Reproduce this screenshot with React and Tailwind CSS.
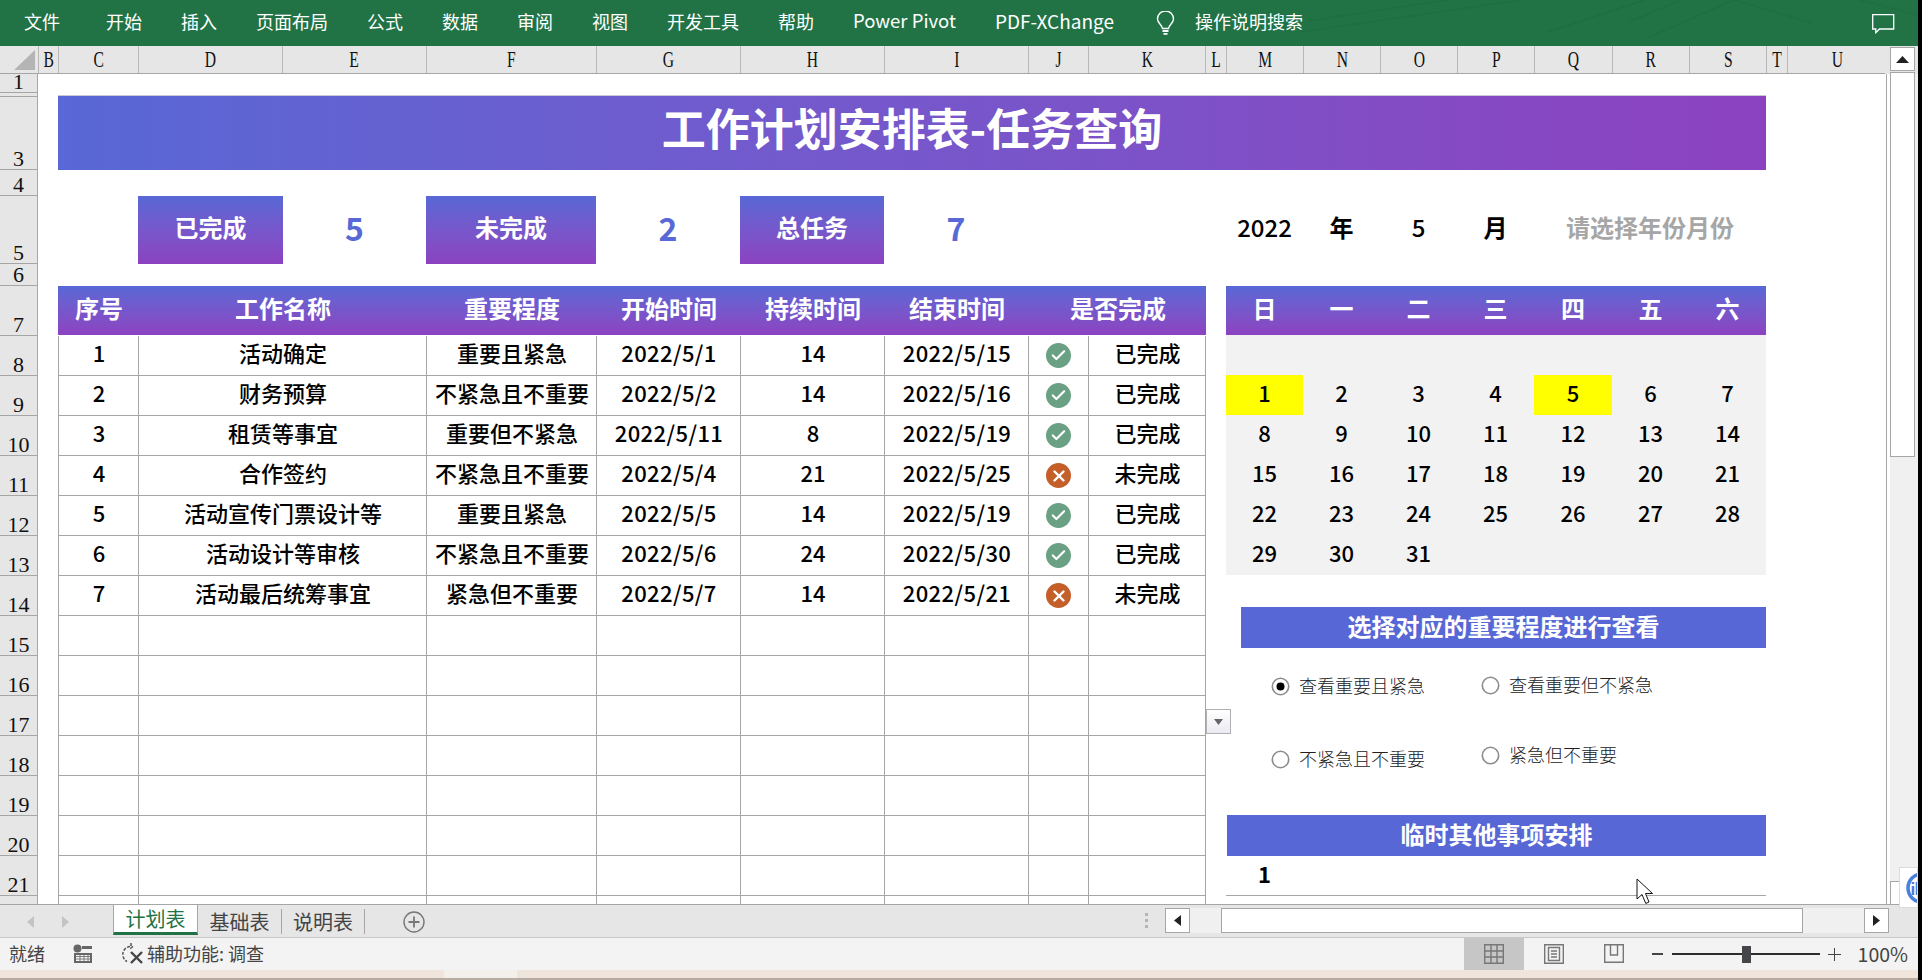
import { Check, X } from "lucide-react";

const ribbonTabs = ["开始", "插入", "页面布局", "公式", "数据", "审阅", "视图", "开发工具", "帮助"];

const columns = [
  { name: "B", w: "w-[20px]" },
  { name: "C", w: "w-[80px]" },
  { name: "D", w: "w-[144px]" },
  { name: "E", w: "w-[144px]" },
  { name: "F", w: "w-[170px]" },
  { name: "G", w: "w-[144px]" },
  { name: "H", w: "w-[144px]" },
  { name: "I", w: "w-[144px]" },
  { name: "J", w: "w-[60px]" },
  { name: "K", w: "w-[117px]" },
  { name: "L", w: "w-[21px]" },
  { name: "M", w: "w-[77px]" },
  { name: "N", w: "w-[77px]" },
  { name: "O", w: "w-[77px]" },
  { name: "P", w: "w-[77px]" },
  { name: "Q", w: "w-[78px]" },
  { name: "R", w: "w-[77px]" },
  { name: "S", w: "w-[77px]" },
  { name: "T", w: "w-[21px]" },
  { name: "U", w: "w-[99px]" },
];

const rowHeaders = [
  { n: "1", h: "h-[19px]" },
  { n: "", h: "h-[4px]" },
  { n: "3", h: "h-[73px]" },
  { n: "4", h: "h-[26px]" },
  { n: "5", h: "h-[68px]" },
  { n: "6", h: "h-[22px]" },
  { n: "7", h: "h-[50px]" },
  ...[8, 9, 10, 11, 12, 13, 14, 15, 16, 17, 18, 19, 20, 21].map((n) => ({ n: String(n), h: "h-10" })),
  { n: "", h: "h-10" },
];

const tasks = [
  [1, "活动确定", "重要且紧急", "2022/5/1", 14, "2022/5/15", true],
  [2, "财务预算", "不紧急且不重要", "2022/5/2", 14, "2022/5/16", true],
  [3, "租赁等事宜", "重要但不紧急", "2022/5/11", 8, "2022/5/19", true],
  [4, "合作签约", "不紧急且不重要", "2022/5/4", 21, "2022/5/25", false],
  [5, "活动宣传门票设计等", "重要且紧急", "2022/5/5", 14, "2022/5/19", true],
  [6, "活动设计等审核", "不紧急且不重要", "2022/5/6", 24, "2022/5/30", true],
  [7, "活动最后统筹事宜", "紧急但不重要", "2022/5/7", 14, "2022/5/21", false],
];

const tableCols = "grid grid-cols-[80px_288px_170px_144px_144px_144px_60px_118px]";
const calCols = "grid grid-cols-[77px_77px_77px_77px_78px_77px_77px]";
const headGradient = "bg-linear-to-b from-[#5868d6] to-[#8c42c0]";
const box = "flex h-10 items-center justify-center border-b border-l border-[#a6a6a6]";
const cell = `${box} pb-[6px] pl-[1px]`;

const days = [...Array(7).fill(""), ...Array.from({ length: 31 }, (_, i) => i + 1), ...Array(4).fill("")];

function StatusIcon({ done }) {
  return (
    <span className={`flex h-[25px] w-[25px] items-center justify-center rounded-full ${done ? "bg-[#6aa084]" : "bg-[#c55f2a]"}`}>
      {done ? <Check size={17} strokeWidth={3} color="#fff" /> : <X size={18} strokeWidth={3.2} color="#fff" />}
    </span>
  );
}

function Radio({ label, checked, className }) {
  return (
    <div className={`flex items-center gap-[9px] ${className}`}>
      <svg width="19" height="19" viewBox="0 0 19 19">
        <circle cx="9.500" cy="9.500" r="8.200" fill="#fff" stroke="#8c8c8c" strokeWidth="1.600" />
        {checked && <circle cx="9.500" cy="9.500" r="4" fill="#000" />}
      </svg>
      <span className="pb-[3px] text-[18px] leading-[20px] font-light text-[#222]">{label}</span>
    </div>
  );
}

function StatCard({ w, label }) {
  return (
    <div className={`flex h-[68px] items-center justify-center pb-[6px] text-[24px] font-bold text-white ${w} ${headGradient}`}>
      {label}
    </div>
  );
}

function StatValue({ w, value }) {
  return <div className={`pb-[6px] text-center text-[32px] font-bold text-[#5868d6] ${w}`}>{value}</div>;
}

export default function App() {
  return (
    <div className="relative flex h-[980px] w-[1922px] flex-col overflow-hidden bg-white font-['Noto_Sans_CJK_SC','Noto_Sans',sans-serif] text-black">
      {/* ribbon */}
      <div className="relative flex h-[46px] w-[1918px] shrink-0 items-center gap-[39px] bg-[#217346] pl-[24px] text-[18px] text-white">
        <svg className="absolute inset-0" width="1918" height="46" fill="none" stroke="#1f6e43" strokeWidth="1.500">
          <path d="M1308 21L1447 0M1300 32L1522 0M1548 32L1645 0M1629 22L1681 0M1649 37L1734 0L1812 23M1860 0L1918 15" />
        </svg>
        <span className="relative mr-[7px] -translate-y-[2px]">文件</span>
        {ribbonTabs.map((t) => (
          <span key={t} className="relative -translate-y-[2px]">{t}</span>
        ))}
        <span className="relative -translate-y-[2px] text-[18.500px]">Power Pivot</span>
        <span className="relative -translate-y-[2px] text-[19px]">PDF-XChange</span>
        <div className="relative ml-[3px] flex items-center gap-[20px]">
          <svg width="19" height="24" viewBox="0 0 19 24" fill="none" stroke="#fff" strokeWidth="1.400">
            <path d="M6.500 17.500C6.200 14 1.500 12 1.500 8a8 8 0 0 1 16 0c0 4-4.700 6-5 9.500z" />
            <path d="M6.500 20h6M7.500 22.800h4" strokeWidth="1.800" />
          </svg>
          <span className="-translate-y-[2px]">操作说明搜索</span>
        </div>
        <svg className="absolute left-[1872px] top-[14px]" width="23" height="20" viewBox="0 0 23 20" fill="none" stroke="#fff" strokeWidth="1.300">
          <path d="M.7.700h21v14.300H7.500l-3.700 3.700v-3.700H.7z" />
        </svg>
      </div>

      {/* column letters */}
      <div className="flex h-[28px] w-[1918px] shrink-0 border-b border-[#a6a6a6] bg-[#e6e6e6]">
        <div className="flex w-[38px] items-end justify-end pb-[3px] pr-[3px]">
          <svg width="21" height="20"><path d="M21 0V20H0z" fill="#b4b4b4" /></svg>
        </div>
        {columns.map((c) => (
          <div key={c.name} className={`flex items-center justify-center border-l border-[#b8b8b8] ${c.w}`}>
            <span className="inline-block scale-x-[0.68] font-['Liberation_Serif',serif] text-[23px] leading-none text-[#111]">{c.name}</span>
          </div>
        ))}
      </div>

      {/* sheet */}
      <div className="flex h-[830px] w-[1918px] shrink-0 overflow-hidden">
        <div className="w-[38px] shrink-0 border-r border-[#a6a6a6] bg-[#e6e6e6]">
          {rowHeaders.map((r, i) => (
            <div key={i} className={`flex items-end justify-center border-b border-[#a6a6a6] font-['Liberation_Serif',serif] text-[22px] leading-[16px] text-[#111] ${r.h}`}>
              {r.n && <span className="pb-[2px]">{r.n}</span>}
            </div>
          ))}
        </div>

        <div className="w-[1849px] shrink-0 border-r border-[#a6a6a6] pl-[20px] font-medium">
          <div className="mt-[21px] flex h-[75px] w-[1708px] items-center justify-center border-t border-[#c8c8d8] bg-linear-to-r from-[#5868d6] to-[#8c42c0] pb-[12px] text-[44px] font-bold text-white">
            工作计划安排表-任务查询
          </div>

          <div className="mt-[26px] flex h-[68px] items-center text-[24px]">
            <div className="w-[80px]" />
            <StatCard w="w-[145px]" label="已完成" />
            <StatValue w="w-[143px]" value="5" />
            <StatCard w="w-[170px]" label="未完成" />
            <StatValue w="w-[144px]" value="2" />
            <StatCard w="w-[144px]" label="总任务" />
            <StatValue w="w-[144px]" value="7" />
            <div className="w-[198px]" />
            <div className="w-[77px] pb-[6px] text-center">2022</div>
            <div className="w-[77px] pb-[6px] text-center font-bold">年</div>
            <div className="w-[77px] pb-[6px] text-center">5</div>
            <div className="w-[77px] pb-[6px] text-center font-bold">月</div>
            <div className="w-[232px] pb-[6px] text-center font-bold text-[#a6a6a6]">请选择年份月份</div>
          </div>

          <div className="mt-[22px] flex gap-[20px]">
            {/* task table */}
            <div className="w-[1148px] shrink-0 text-[22px]">
              <div className={`${tableCols} mb-px h-[49px] items-center pb-[5px] text-center text-[24px] font-bold text-white [&>div]:pl-[2px] ${headGradient}`}>
                <div>序号</div>
                <div>工作名称</div>
                <div>重要程度</div>
                <div>开始时间</div>
                <div>持续时间</div>
                <div>结束时间</div>
                <div className="col-span-2">是否完成</div>
              </div>
              {Array.from({ length: 15 }, (_, i) => tasks[i] || []).map((t, i) => (
                <div key={i} className={tableCols}>
                  <div className={cell}>{t[0]}</div>
                  <div className={cell}>{t[1]}</div>
                  <div className={cell}>{t[2]}</div>
                  <div className={`${cell} tracking-[0.4px]`}>{t[3]}</div>
                  <div className={cell}>{t[4]}</div>
                  <div className={`${cell} tracking-[0.4px]`}>{t[5]}</div>
                  <div className={box}>{t[0] && <StatusIcon done={t[6]} />}</div>
                  <div className={`${cell} border-r`}>{t[0] && (t[6] ? "已完成" : "未完成")}</div>
                </div>
              ))}
            </div>

            {/* calendar and side panels */}
            <div className="relative w-[540px] shrink-0">
              <div className={`${calCols} h-[49px] items-center pb-[5px] text-center text-[24px] font-bold text-white ${headGradient}`}>
                {["日", "一", "二", "三", "四", "五", "六"].map((d) => (
                  <div key={d}>{d}</div>
                ))}
              </div>
              <div className={`${calCols} bg-[#f2f2f2] text-[22px]`}>
                {days.map((d, i) => (
                  <div key={i} className={`flex h-10 items-center justify-center pb-[6px] ${d === 1 || d === 5 ? "bg-[#ffff00]" : ""}`}>
                    {d}
                  </div>
                ))}
              </div>

              <div className="ml-[15px] mt-[32px] flex h-[41px] items-center justify-center bg-[#5867d6] pb-[4px] text-[24px] font-bold text-white">
                选择对应的重要程度进行查看
              </div>
              <div className="flex h-[167px] pl-[45px]">
                <div className="w-[210px] pt-[27px]">
                  <Radio label="查看重要且紧急" checked />
                  <Radio label="不紧急且不重要" className="mt-[50px]" />
                </div>
                <div className="pt-[26px]">
                  <Radio label="查看重要但不紧急" />
                  <Radio label="紧急但不重要" className="mt-[47px]" />
                </div>
              </div>

              <div className="ml-[1px] flex h-[41px] items-center justify-center bg-[#5867d6] pb-[4px] text-[24px] font-bold text-white">
                临时其他事项安排
              </div>
              <div className="flex h-10 items-center border-b border-[#a6a6a6] text-[22px] font-bold">
                <div className="w-[77px] pb-[4px] text-center">1</div>
              </div>

              {/* collapse button floating between the table and the side panel */}
              <div className="absolute -left-[20px] top-[423px] flex h-[25px] w-[25px] items-center justify-center border border-[#b0b0b0] bg-linear-to-b from-white to-[#eaeaf2]">
                <svg width="9" height="6"><path d="M0 0H9L4.500 6z" fill="#666" /></svg>
              </div>

              {/* mouse pointer */}
              <svg className="absolute left-[410px] top-[592px]" width="20" height="27" viewBox="0 0 20 27">
                <path d="M1 1V21L6 16.500L9.800 25.500L13 24L9.500 15.500H16.500z" fill="#fff" stroke="#111" strokeWidth="1" />
              </svg>
            </div>
          </div>
        </div>

        {/* vertical scrollbar slot */}
        <div className="ml-[2px] w-[25px] shrink-0" />
      </div>

      {/* sheet tabs and horizontal scrollbar */}
      <div className="flex h-[33px] w-[1918px] shrink-0 items-start border-t border-[#a6a6a6] bg-[#e6e6e6] text-[20px] text-[#444]">
        <div className="ml-[27px] mt-[11px] flex w-[86px] gap-[28px]">
          <svg width="7" height="12"><path d="M7 0V12L0 6z" fill="#c4c4c4" /></svg>
          <svg width="7" height="12"><path d="M0 0V12L7 6z" fill="#c4c4c4" /></svg>
        </div>
        <div className="flex h-[30px] w-[85px] items-center justify-center border-x border-b-[3px] border-x-[#a6a6a6] border-b-[#217346] bg-white leading-none text-[#217346]">计划表</div>
        <div className="mt-[4px] flex h-[25px] w-[84px] items-center justify-center border-r border-[#a6a6a6] leading-none">基础表</div>
        <div className="mt-[4px] flex h-[25px] w-[83px] items-center justify-center border-r border-[#a6a6a6] leading-none">说明表</div>
        <svg className="ml-[38px] mt-[6px]" width="22" height="22" viewBox="0 0 22 22" fill="none" stroke="#777" strokeWidth="1.400">
          <circle cx="11" cy="11" r="10" />
          <path d="M11 5.500v11M5.500 11h11" strokeWidth="1.800" />
        </svg>
        <div className="ml-[720px] mt-[8px] flex w-[3px] flex-col gap-[3px]">
          <span className="h-[3px] bg-[#b4b4b4]" />
          <span className="h-[3px] bg-[#b4b4b4]" />
          <span className="h-[3px] bg-[#b4b4b4]" />
        </div>
        <div className="ml-[17px] mt-[3px] flex h-[25px]">
          <div className="flex w-[25px] items-center justify-center border border-[#a6a6a6] bg-white">
            <svg width="7" height="11"><path d="M7 0V11L0 5.500z" fill="#222" /></svg>
          </div>
          <div className="w-[674px] bg-[#f0f0f0] pl-[31px]">
            <div className="h-full w-[582px] border border-[#a6a6a6] bg-white" />
          </div>
          <div className="flex w-[25px] items-center justify-center border border-[#a6a6a6] bg-white">
            <svg width="7" height="11"><path d="M0 0V11L7 5.500z" fill="#222" /></svg>
          </div>
        </div>
      </div>

      {/* status bar */}
      <div className="flex h-[33px] w-[1918px] shrink-0 items-center border-t border-[#c8c8c8] bg-[#f3f3f3] text-[18px] text-[#444]">
        <span className="ml-[9px] -translate-y-[1px]">就绪</span>
        <svg className="ml-[28px]" width="20" height="20" viewBox="0 0 20 20" fill="#666">
          <circle cx="4.500" cy="4.500" r="4" />
          <path d="M9 2h10v3H9zM1 9h18v10H1z" />
          <path d="M3 11h14v6H3z" fill="#f3f3f3" />
          <path d="M3 12.500h14M3 15h14M7 11v6M11 11v6M15 11v6" stroke="#666" strokeWidth=".8" />
        </svg>
        <svg className="ml-[29px]" width="22" height="24" viewBox="0 0 22 24" fill="none" stroke="#555" strokeWidth="1.500">
          <path d="M8 4.500a8 8 0 0 0-3 15M9 1v5l3-2.500" strokeDasharray="3 1.500" />
          <path d="M9 10l11 11M20 10L9 21" strokeWidth="2.400" stroke="#444" />
        </svg>
        <span className="ml-[3px] -translate-y-[1px]">辅助功能: 调查</span>

        <div className="ml-auto flex h-full items-center">
          <div className="flex h-full w-[60px] items-center justify-center bg-[#c6c6c6]">
            <svg width="20" height="20" fill="none" stroke="#777" strokeWidth="1.400">
              <path d="M.7.700h18.600v18.600H.7zM7 .7v18.600M13 .7v18.600M.7 7h18.600M.7 13h18.600" />
            </svg>
          </div>
          <div className="flex h-full w-[60px] items-center justify-center">
            <svg width="20" height="20" fill="none" stroke="#777" strokeWidth="1.400">
              <path d="M.7.700h18.600v18.600H.7zM4.500 3.500h11v13h-11zM7 7h6M7 10h6M7 13h6" />
            </svg>
          </div>
          <div className="flex h-full w-[60px] items-center justify-center">
            <svg width="20" height="20" fill="none" stroke="#777" strokeWidth="1.400">
              <path d="M.7.700h18.600v17.600H.7zM6.500.7v10.300h7V.7" />
            </svg>
          </div>
          <div className="ml-[8px] h-[1.500px] w-[11px] bg-[#444]" />
          <div className="relative ml-[9px] h-[2.500px] w-[148px] bg-[#2d2d2d]">
            <div className="absolute -top-[7px] left-[70px] h-[17px] w-[9px] bg-[#45464a]" />
          </div>
          <div className="relative ml-[8px] h-[13px] w-[13px]">
            <div className="absolute left-0 top-[6px] h-[1.500px] w-[13px] bg-[#444]" />
            <div className="absolute left-[6px] top-0 h-[13px] w-[1.500px] bg-[#444]" />
          </div>
          <span className="ml-[17px] mr-[10px] text-[19.500px] text-[#444]">100%</span>
        </div>
      </div>

      {/* window edge below the status bar */}
      <div className="flex h-[10px] w-[1918px] shrink-0 border-b-2 border-[#b8aca2] bg-[#efe5dc]">
        <div className="ml-[444px] w-[73px] bg-[#f3f0ec]" />
      </div>

      {/* overlays: scrollbar, helper widget, black edge */}
      <div className="absolute right-0 top-0 h-full w-[4px] bg-black" />
      <div className="absolute left-[1915px] top-[74px] h-[830px] w-[3px] bg-[#f0f0f0]" />
      <div className="absolute left-[1885px] top-[46px] h-[28px] w-[33px] bg-[#e6e6e6]" />
      <div className="absolute left-[1890px] top-[47px] flex h-[24px] w-[25px] items-center justify-center border border-[#a6a6a6] bg-white">
        <svg width="13" height="7"><path d="M0 7H13L6.500 0z" fill="#222" /></svg>
      </div>
      <div className="absolute left-[1890px] top-[72px] flex h-[832px] w-[25px] flex-col bg-[#f0f0f0]">
        <div className="h-[385px] border border-[#a6a6a6] bg-white" />
      </div>
      <div className="absolute left-[1890px] top-[881px] h-[24px] w-[10px] border border-[#a6a6a6] bg-white" />
      <div className="absolute left-[1899px] top-[867px] h-[41px] w-[19px] overflow-hidden border border-[#dcdcdc] bg-white">
        <svg width="19" height="41">
          <circle cx="22" cy="20" r="14" fill="none" stroke="#4a7fe0" strokeWidth="3.500" />
          <path d="M13 14v2M13 18v9M17 14v13" stroke="#4a7fe0" strokeWidth="2.500" />
        </svg>
      </div>
    </div>
  );
}
